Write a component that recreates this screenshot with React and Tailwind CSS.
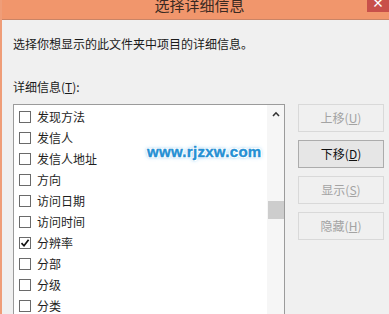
import React from "react";

const items = [
  { label: "发现方法", checked: false },
  { label: "发信人", checked: false },
  { label: "发信人地址", checked: false },
  { label: "方向", checked: false },
  { label: "访问日期", checked: false },
  { label: "访问时间", checked: false },
  { label: "分辨率", checked: true },
  { label: "分部", checked: false },
  { label: "分级", checked: false },
  { label: "分类", checked: false },
];

const font = { fontFamily: '"Noto Sans CJK SC", "Liberation Sans", sans-serif' };

function Btn({ text, hot, enabled }) {
  return (
    <button
      className={
        "h-[28px] w-[86px] text-[12px] leading-none border " +
        (enabled
          ? "border-[#acacac] bg-[#e6e6e6] text-[#111]"
          : "border-[#d9d9d9] bg-[#f0f0f0] text-[#a3a3a3]")
      }
    >
      {text}(<span className="underline">{hot}</span>)
    </button>
  );
}

export default function App() {
  return (
    <div
      className="relative w-[389px] h-[314px] overflow-hidden bg-[#f0f0f0] border-l-2 border-[#ef9d78] flex flex-col"
      style={font}
    >
      {/* title bar */}
      <div className="relative h-[20px] shrink-0 bg-[#f1966c] border-b border-[#c98466] flex justify-center pl-[8px] overflow-hidden">
        <span className="text-[15px] leading-[20px] -mt-[5px] text-[#3a2a22]">选择详细信息</span>
        <div className="absolute right-0 top-0 w-[22px] h-[12px] bg-[#c8504a] flex justify-center overflow-hidden">
          <span className="text-white text-[12px] leading-[12px] -mt-[3px] font-bold">×</span>
        </div>
      </div>

      <div className="pl-[11px] flex flex-col flex-1">
        <p className="mt-[16px] text-[12px] leading-4 text-[#1a1a1a]">
          选择你想显示的此文件夹中项目的详细信息。
        </p>
        <p className="mt-[27px] text-[12px] leading-4 text-[#1a1a1a]">
          详细信息(<span className="underline">T</span>):
        </p>

        <div className="mt-[9px] flex flex-1 items-start">
          {/* list */}
          <div className="w-[272px] h-[230px] border border-[#9b9b9b] bg-white flex">
            <div className="flex-1 pt-[1px] pl-[5px]">
              {items.map((it) => (
                <div key={it.label} className="h-[21px] flex items-center gap-[6px]">
                  <div className="w-[12px] h-[12px] border border-[#6a6a6a] bg-white flex items-center justify-center">
                    {it.checked && (
                      <svg width="10" height="10" viewBox="0 0 10 10">
                        <path d="M1.5 5.2 L4 7.8 L8.6 1.8" stroke="#111" strokeWidth="1.7" fill="none" />
                      </svg>
                    )}
                  </div>
                  <span className="text-[12px] leading-none text-[#1e1e1e]">{it.label}</span>
                </div>
              ))}
            </div>
            <div className="w-[17px] bg-[#f6f6f6] flex flex-col items-center">
              <div className="h-[17px] w-full flex items-center justify-center">
                <svg width="8" height="6" viewBox="0 0 8 6">
                  <path d="M1 5 L4 1.8 L7 5" stroke="#333" strokeWidth="1.6" fill="none" />
                </svg>
              </div>
              <div className="mt-[79px] w-[16px] h-[18px] bg-[#cdcdcd]" />
            </div>
          </div>

          {/* buttons */}
          <div className="ml-[13px] flex flex-col gap-[8px]">
            <Btn text="上移" hot="U" enabled={false} />
            <Btn text="下移" hot="D" enabled={true} />
            <Btn text="显示" hot="S" enabled={false} />
            <Btn text="隐藏" hot="H" enabled={false} />
          </div>
        </div>
      </div>

      {/* watermark */}
      <div
        className="absolute left-[145px] top-[141px] text-[15px] font-bold text-[#2590d4] tracking-[0.3px]"
        style={{
          fontFamily: '"Liberation Sans", sans-serif',
          WebkitTextStroke: "0.4px #2590d4",
          textShadow:
            "1px 0 0 #fff, -1px 0 0 #fff, 0 1px 0 #fff, 0 -1px 0 #fff, 1px 1px 0 #fff, -1px -1px 0 #fff, 1px -1px 0 #fff, -1px 1px 0 #fff, 0 0 3px #6fbbe8, 0 0 5px #8fcaf0",
        }}
      >
        www.rjzxw.com
      </div>
    </div>
  );
}
